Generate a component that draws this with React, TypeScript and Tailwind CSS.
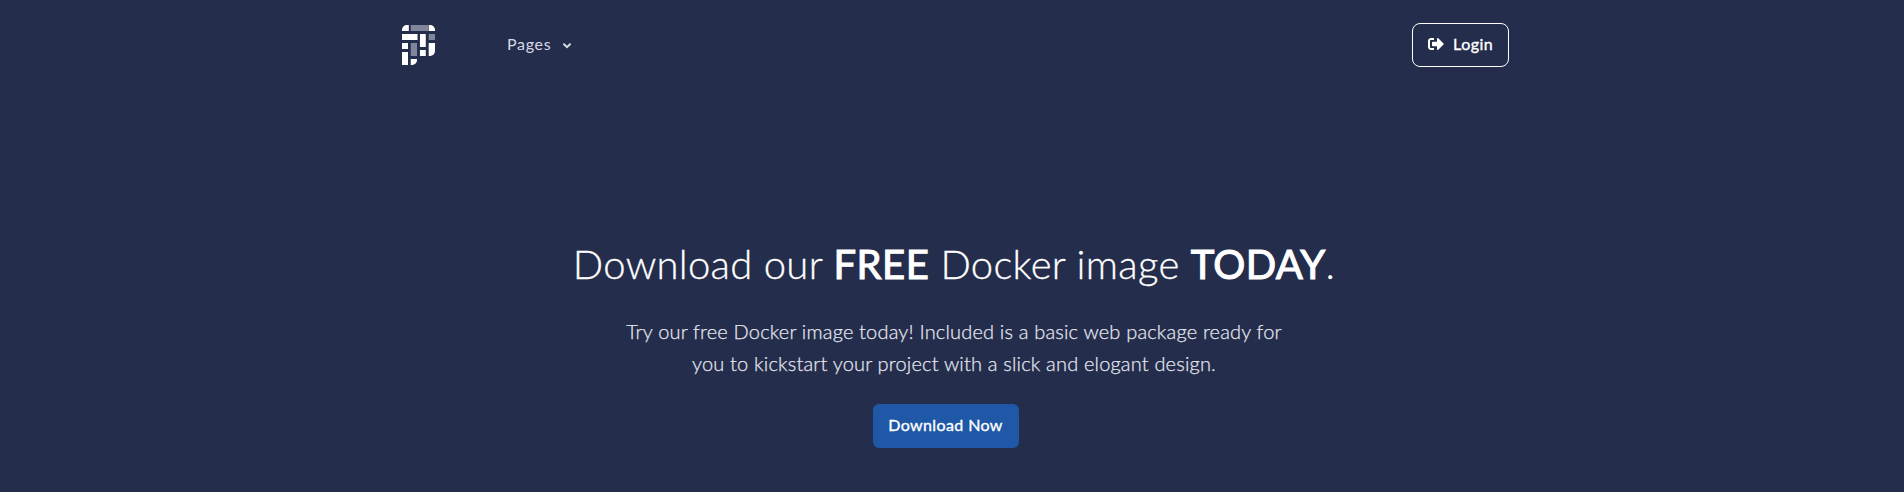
import React from "react";

function Logo() {
  return (
    <svg viewBox="0 0 34 40" preserveAspectRatio="none" className="h-10 w-[33px]" fill="#fff">
      <path d="M0 6V5a5 5 0 0 1 5-5h2v6z" />
      <path d="M9 0h18v6H9z" fill="#7f859b" />
      <path d="M27.500 0h1.500a5 5 0 0 1 5 5v1h-6.500z" />
      <path d="M0 9h16v6H0z" />
      <path d="M18.500 9H24.500v13H18.500z" />
      <path d="M27.500 9H34v6h-6.500z" fill="#7f859b" />
      <path d="M0 18h6.200v6H0z" />
      <path d="M9 18h6.500v13H9z" fill="#7f859b" />
      <path d="M27.500 18H34v8a5 5 0 0 1-5 5h-1.500z" />
      <path d="M18.500 25h6v6h-6z" />
      <path d="M0 27h6.200v13H0z" />
      <path d="M9 34h6.500v1a5 5 0 0 1-5 5H9z" />
    </svg>
  );
}

export default function App() {
  return (
    <div className="h-[492px] overflow-hidden bg-[#242d4b] font-['Lato','Open_Sans',sans-serif] text-white">
      <header className="mx-auto flex h-[90px] w-[1114px] items-center pl-[7px]">
        <Logo />
        <nav className="ml-[72px] flex items-center pb-0.5 text-base text-[#d5d9e6]">
          <span className="tracking-[0.7px]">Pages</span>
          <svg viewBox="0 0 8 6" className="mt-[3px] ml-3 h-[6px] w-2" fill="none" stroke="currentColor" strokeWidth="2" strokeLinecap="round">
            <path d="M1 1.200l3 3 3-3" />
          </svg>
        </nav>
        <button className="ml-auto flex h-11 w-[97px] items-center rounded-lg border border-white pl-[15px] text-base font-normal">
          <svg viewBox="0 0 512 512" className="mb-0.5 h-4 w-4" fill="currentColor">
            <path d="M497 273L329 441c-15 15-41 4.500-41-17v-96H152c-13.300 0-24-10.700-24-24v-96c0-13.300 10.700-24 24-24h136V88c0-21.400 25.900-32 41-17l168 168c9.300 9.400 9.300 24.600 0 34zM192 436v-40c0-6.600-5.400-12-12-12H96c-17.700 0-32-14.300-32-32V160c0-17.700 14.300-32 32-32h84c6.600 0 12-5.400 12-12V76c0-6.600-5.400-12-12-12H96c-53 0-96 43-96 96v192c0 53 43 96 96 96h84c6.600 0 12-5.400 12-12z" />
          </svg>
          <span className="ml-[9px] pb-0.5 tracking-[0.5px] [-webkit-text-stroke:0.35px]">Login</span>
        </button>
      </header>
      <main className="flex flex-col items-center pt-[144px] pl-[4px]">
        <h1 className="whitespace-nowrap text-[40px] leading-[60px] font-light tracking-[0.3px] [-webkit-text-stroke:0.3px]">
          Download our <strong className="font-normal tracking-[0.5px] [-webkit-text-stroke:1.1px]">FREE</strong> Docker image{" "}
          <strong className="font-normal tracking-[0.3px] [-webkit-text-stroke:1.1px]">TODAY</strong>.
        </h1>
        <p className="mt-[21px] whitespace-nowrap text-center text-xl leading-8 font-light tracking-[0.18px] text-[#e3e6ef] [-webkit-text-stroke:0.25px]">
          Try our free Docker image today! Included is a basic web package ready for
          <br />
          you to kickstart your project with a slick and elogant design.
        </p>
        <button className="mt-[25px] mr-[17px] h-11 w-[146px] rounded-md bg-[#1e58a6] pb-0.5 text-base font-normal tracking-[0.4px] [-webkit-text-stroke:0.35px]">
          Download Now
        </button>
      </main>
    </div>
  );
}
